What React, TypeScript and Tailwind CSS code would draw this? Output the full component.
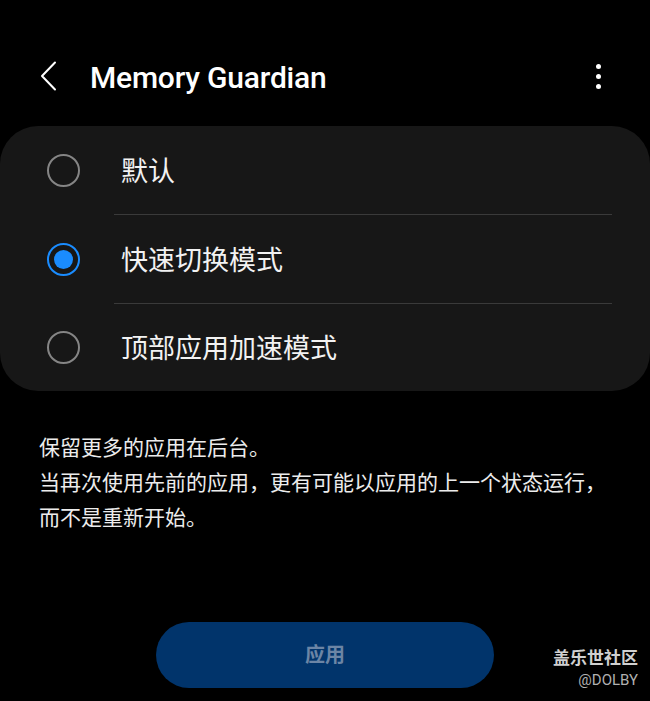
import React, { useState } from 'react';

const options = ['默认', '快速切换模式', '顶部应用加速模式'];

const Radio: React.FC<{ checked: boolean }> = ({ checked }) => (
  <div
    className={`w-[33px] h-[33px] rounded-full flex items-center justify-center shrink-0 border-2 ${
      checked ? 'border-[#1a8cff]' : 'border-[#858585]'
    }`}
  >
    {checked && <div className="w-[19px] h-[19px] rounded-full bg-[#1a8cff]" />}
  </div>
);

export default function App() {
  const [selected, setSelected] = useState(1);

  return (
    <div
      className="relative w-[650px] h-[701px] bg-black text-white overflow-hidden"
      style={{ fontFamily: 'Roboto, "Noto Sans CJK SC", sans-serif' }}
    >
      {/* Header */}
      <div className="h-[126px] pt-[26px] flex items-center">
        <svg width="18" height="30" viewBox="0 0 18 30" className="ml-[40px] shrink-0">
          <path d="M15 1.5 L2 15 L15 28.5" fill="none" stroke="#fff" strokeWidth="2" strokeLinecap="round" strokeLinejoin="round" />
        </svg>
        <h1 className="ml-[32px] pt-[3px] text-[30px] font-medium tracking-[-0.2px] flex-1">Memory Guardian</h1>
        <div className="mr-[49px] flex flex-col gap-[5px]">
          <div className="w-[5px] h-[5px] rounded-full bg-white" />
          <div className="w-[5px] h-[5px] rounded-full bg-white" />
          <div className="w-[5px] h-[5px] rounded-full bg-white" />
        </div>
      </div>

      {/* Options card */}
      <div className="bg-[#171717] rounded-[38px]">
        {options.map((label, i) => (
          <div key={label}>
            {i > 0 && <div className="ml-[114px] mr-[38px] h-px bg-[#3a3a3a]" />}
            <button
              onClick={() => setSelected(i)}
              className={`w-full flex items-center pl-[47px] text-left ${i === 2 ? 'h-[87px]' : 'h-[88px]'}`}
            >
              <Radio checked={selected === i} />
              <span className="ml-[41px] pt-[4px] text-[27px] text-[#f2f2f2]">{label}</span>
            </button>
          </div>
        ))}
      </div>

      {/* Description */}
      <div className="mt-[40px] px-[39px] text-[21px] leading-[35px] text-[#ececec]">
        <p>保留更多的应用在后台。</p>
        <p>当再次使用先前的应用，更有可能以应用的上一个状态运行，而不是重新开始。</p>
      </div>

      {/* Apply button */}
      <div className="mt-[86px] flex justify-center">
        <button className="w-[338px] h-[66px] rounded-full bg-[#01346b] text-[#6c85a5] text-[20px] font-bold">
          应用
        </button>
      </div>

      {/* Watermark */}
      <div className="absolute right-[12px] bottom-[13px] flex flex-col items-end leading-none">
        <span className="text-[17px] font-bold text-[#d0d0d0]">盖乐世社区</span>
        <span className="mt-[6px] text-[15px] text-[#b0b0b0]">@DOLBY</span>
      </div>
    </div>
  );
}
